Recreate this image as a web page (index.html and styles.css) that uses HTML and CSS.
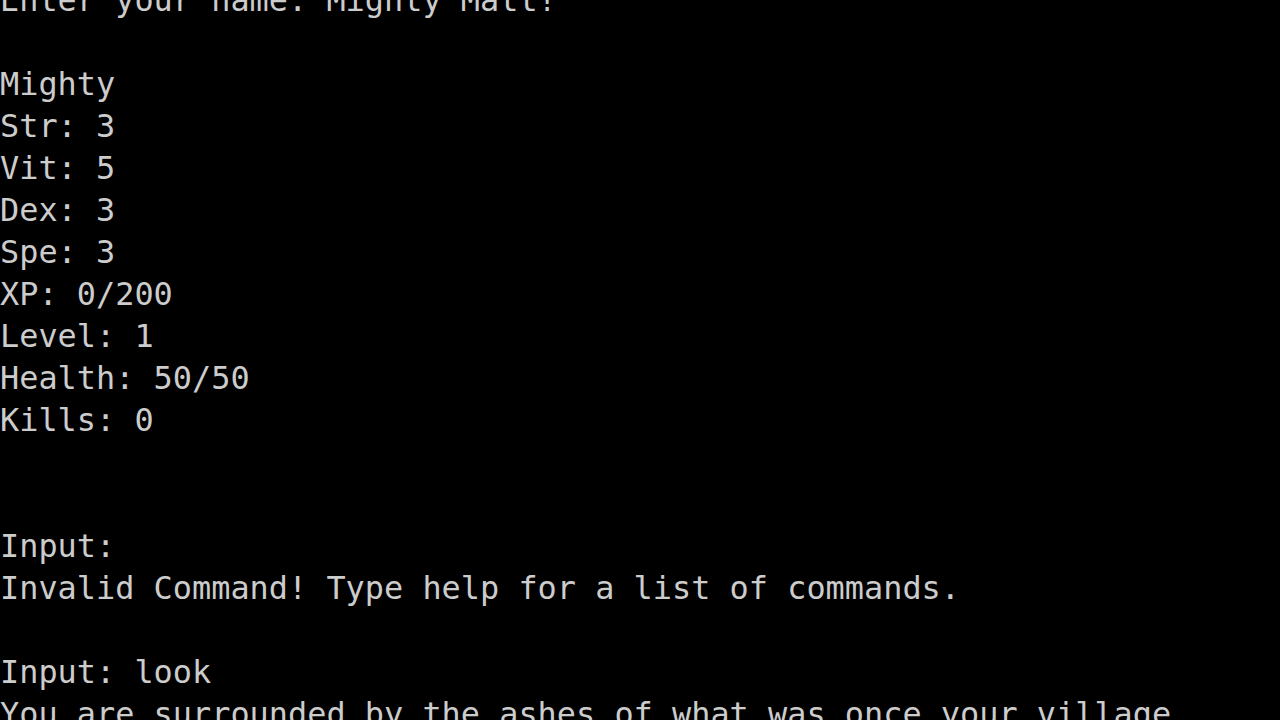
FILE: index.html
```html
<!DOCTYPE html>
<html>
<head>
<meta charset="utf-8">
<link rel="stylesheet" href="styles.css">
</head>
<body>
<pre class="console">Enter your name: Mighty Matt!

Mighty
Str: 3
Vit: 5
Dex: 3
Spe: 3
XP: 0/200
Level: 1
Health: 50/50
Kills: 0


Input:
Invalid Command! Type help for a list of commands.

Input: look
You are surrounded by the ashes of what was once your village.</pre>
</body>
</html>
```
FILE: styles.css
```css
html, body {
  margin: 0;
  padding: 0;
  background: #000000;
  overflow: hidden;
  width: 1280px;
  height: 720px;
}
.console {
  margin: -21px 0 0 0;
  padding: 0;
  font-family: "DejaVu Sans Mono", "Liberation Mono", monospace;
  font-size: 31.9px;
  line-height: 42px;
  color: #cccccc;
  white-space: pre;
}
```
